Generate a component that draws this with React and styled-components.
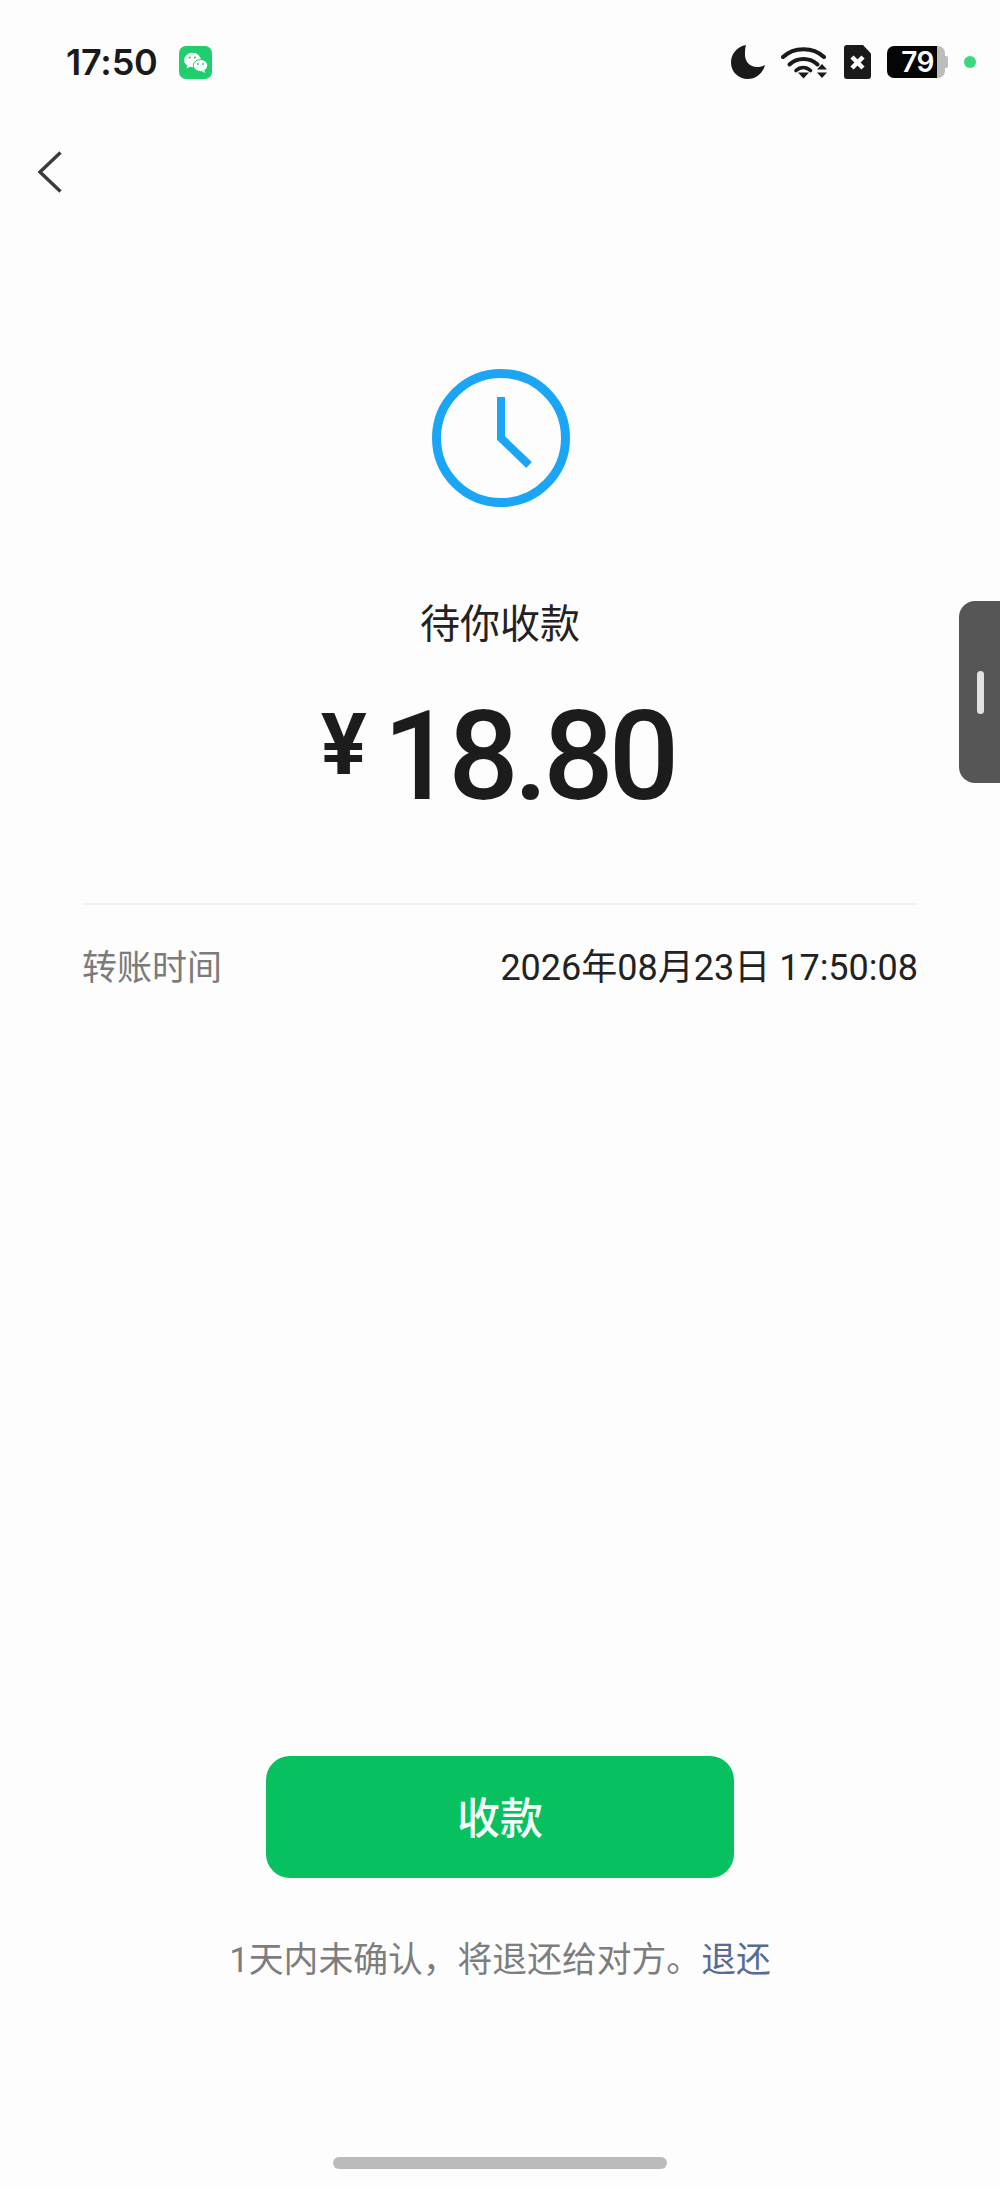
import React from "react";
import styled, { createGlobalStyle } from "styled-components";

const GlobalStyle = createGlobalStyle`
  html, body {
    margin: 0;
    padding: 0;
    background: #fdfdfd;
  }
  * {
    box-sizing: border-box;
  }
`;

const CJK = `Roboto, "Noto Sans CJK SC", sans-serif`;

const Page = styled.div`
  position: relative;
  display: flex;
  flex-direction: column;
  width: 1000px;
  height: 2187px;
  overflow: hidden;
  background: #fdfdfd;
  color: #1c1c1c;
  font-family: ${CJK};
`;

const StatusBar = styled.div`
  display: flex;
  align-items: center;
  justify-content: space-between;
  height: 124px;
  padding: 0 24px 0 66px;
`;

const StatusLeft = styled.div`
  display: flex;
  align-items: center;
  gap: 21px;
`;

const StatusRight = styled.div`
  display: flex;
  align-items: center;
  gap: 16px;
`;

const Time = styled.span`
  font-family: Inter, sans-serif;
  font-size: 36px;
  font-weight: 600;
  line-height: 44px;
  letter-spacing: -0.2px;
  color: #1a1a1a;
`;

const Battery = styled.div`
  display: flex;
  align-items: center;
  width: 61px;
  height: 32px;
`;

const BatteryLevel = styled.div`
  display: flex;
  align-items: center;
  justify-content: flex-end;
  width: 50px;
  height: 32px;
  padding-right: 3px;
  background: #050505;
  border-radius: 7px 0 0 7px;
  color: #fff;
  font-family: Inter, sans-serif;
  font-size: 28px;
  font-weight: 600;
  letter-spacing: -0.5px;
`;

const BatteryRest = styled.div`
  width: 8px;
  height: 32px;
  background: #bdbdbd;
  border-radius: 0 7px 7px 0;
`;

const BatteryNub = styled.div`
  width: 3px;
  height: 12px;
  background: #bdbdbd;
  border-radius: 0 2px 2px 0;
`;

const GreenDot = styled.div`
  width: 12px;
  height: 12px;
  border-radius: 50%;
  background: #3bd680;
`;

const BackRow = styled.div`
  display: flex;
  padding: 27px 0 0 38px;
`;

const Summary = styled.div`
  display: flex;
  flex-direction: column;
  align-items: center;
  padding-top: 176px;
`;

const Title = styled.div`
  margin-top: 90px;
  font-size: 40px;
  line-height: 56px;
  color: #222;
`;

const Amount = styled.div`
  display: flex;
  align-items: flex-start;
  justify-content: center;
  gap: 16px;
  height: 140px;
  margin-top: 34px;
  padding-right: 5px;
  font-family: Roboto, sans-serif;
  color: #1c1c1c;
`;

const Yen = styled.span`
  margin-top: 8px;
  font-size: 86px;
  font-weight: 700;
  line-height: 100px;
`;

const Digits = styled.span`
  font-size: 124px;
  font-weight: 500;
  line-height: 140px;
  letter-spacing: -5px;
`;

const Details = styled.div`
  margin: 76px 82px 0;
  border-top: 2px solid #f2f2f2;
`;

const DetailRow = styled.div`
  display: flex;
  align-items: center;
  justify-content: space-between;
  height: 118px;
`;

const DetailLabel = styled.span`
  font-size: 35px;
  color: #7b7b7b;
`;

const DetailValue = styled.span`
  font-size: 36px;
  color: #222;
`;

const Footer = styled.div`
  display: flex;
  flex-direction: column;
  align-items: center;
  margin-top: auto;
`;

const ConfirmButton = styled.button`
  width: 468px;
  height: 122px;
  padding: 0 0 4px;
  border: 0;
  border-radius: 24px;
  background: #07c160;
  color: #f4fff9;
  font-family: ${CJK};
  font-size: 43px;
  font-weight: 500;
`;

const Notice = styled.div`
  margin-top: 57px;
  font-size: 34.800px;
  line-height: 50px;
  color: #7d7d7d;
`;

const ReturnLink = styled.span`
  color: #576b95;
`;

const HomeBar = styled.div`
  width: 334px;
  height: 12px;
  margin: 172px 0 18px;
  border-radius: 6px;
  background: #bbbbbb;
`;

const SideHandle = styled.div`
  position: absolute;
  top: 601px;
  right: 0;
  display: flex;
  align-items: center;
  width: 41px;
  height: 182px;
  padding-left: 18px;
  border-radius: 16px 0 0 16px;
  background: #565656;
`;

const HandleGrip = styled.div`
  width: 7px;
  height: 43px;
  border-radius: 4px;
  background: #e2e2e2;
`;

const WeChatIcon = () => (
  <svg width="33" height="33" viewBox="0 0 33 33">
    <rect width="33" height="33" rx="7" fill="#1fce6c" />
    <ellipse cx="13.500" cy="14" rx="8.500" ry="7.200" fill="#fff" />
    <path d="M8.500 19l-1 3.500 4-2z" fill="#fff" />
    <ellipse cx="21.500" cy="19.500" rx="7.200" ry="6" fill="#fff" stroke="#1fce6c" strokeWidth="1" />
    <path d="M25 24l1.500 3-4-1.800z" fill="#fff" />
    <circle cx="10.800" cy="11.500" r="1.100" fill="#1fce6c" />
    <circle cx="16" cy="11.500" r="1.100" fill="#1fce6c" />
    <circle cx="19" cy="18" r="0.900" fill="#1fce6c" />
    <circle cx="24" cy="18" r="0.900" fill="#1fce6c" />
  </svg>
);

const MoonIcon = () => (
  <svg width="34" height="34" viewBox="0 0 34 34">
    <path
      d="M15 0C6 1.500 0 9 0 17.500 0 27 7.500 34 17 34c8 0 15-6 17-14-3 1.500-5.500 2-8 2-7 0-12-5.500-12-12 0-3.500 0-7 1-10z"
      fill="#1a1a1a"
    />
  </svg>
);

const WifiIcon = () => (
  <svg width="47" height="34" viewBox="0 0 47 34" fill="none">
    <path d="M2 12C13 1.500 32 1.500 43 12" stroke="#1a1a1a" strokeWidth="4" strokeLinecap="round" />
    <path d="M8.500 19.500C16 12 29 12 36.500 19.500" stroke="#1a1a1a" strokeWidth="4" strokeLinecap="round" />
    <path d="M15 25.500c4.500-4 10-4 14.500 0" stroke="#1a1a1a" strokeWidth="3.600" strokeLinecap="round" />
    <path d="M17 27.500h11L22.500 33.500z" fill="#1a1a1a" />
    <path d="M36 24.500h10L41 19z" fill="#1a1a1a" />
    <path d="M36 27.500h10L41 33z" fill="#1a1a1a" />
  </svg>
);

const SimIcon = () => (
  <svg width="27" height="34" viewBox="0 0 27 34">
    <path
      d="M3 0h16l8 8.500V31a3 3 0 0 1-3 3H3a3 3 0 0 1-3-3V3a3 3 0 0 1 3-3z"
      fill="#1a1a1a"
    />
    <path d="M8 12l11 11M19 12L8 23" stroke="#fff" strokeWidth="4.500" />
  </svg>
);

const BackIcon = () => (
  <svg width="24" height="42" viewBox="0 0 24 42" fill="none">
    <path d="M22.500 1.500L2 21l20.500 19.500" stroke="#3a3a3a" strokeWidth="3.400" />
  </svg>
);

const ClockIcon = () => (
  <svg width="140" height="138" viewBox="0 0 140 138" fill="none">
    <circle cx="71" cy="69" r="64.500" stroke="#1ba5f5" strokeWidth="9" />
    <path d="M71 28v41l28 27" stroke="#1ba5f5" strokeWidth="8" />
  </svg>
);

const App = () => {
  return (
    <Page>
      <GlobalStyle />
      <StatusBar>
        <StatusLeft>
          <Time>17:50</Time>
          <WeChatIcon />
        </StatusLeft>
        <StatusRight>
          <MoonIcon />
          <WifiIcon />
          <SimIcon />
          <Battery>
            <BatteryLevel>79</BatteryLevel>
            <BatteryRest />
            <BatteryNub />
          </Battery>
          <GreenDot />
        </StatusRight>
      </StatusBar>
      <BackRow>
        <BackIcon />
      </BackRow>
      <Summary>
        <ClockIcon />
        <Title>待你收款</Title>
        <Amount>
          <Yen>¥</Yen>
          <Digits>18.80</Digits>
        </Amount>
      </Summary>
      <Details>
        <DetailRow>
          <DetailLabel>转账时间</DetailLabel>
          <DetailValue>2026年08月23日 17:50:08</DetailValue>
        </DetailRow>
      </Details>
      <Footer>
        <ConfirmButton>收款</ConfirmButton>
        <Notice>
          1天内未确认，将退还给对方。<ReturnLink>退还</ReturnLink>
        </Notice>
        <HomeBar />
      </Footer>
      <SideHandle>
        <HandleGrip />
      </SideHandle>
    </Page>
  );
};

export default App;
